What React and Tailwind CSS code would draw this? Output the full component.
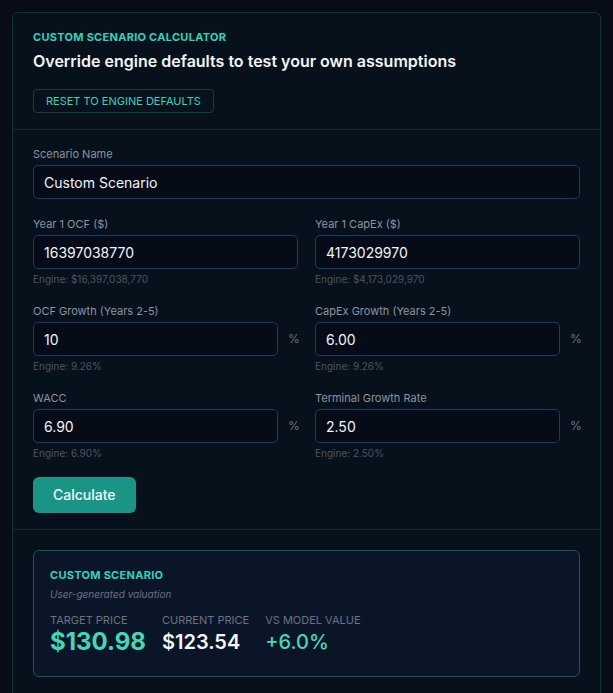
export default function App() {
	const font = { fontFamily: "Inter, 'Noto Sans', sans-serif" };

	const Field = ({ label, value, engine, pct }) => (
		<div className="flex flex-col">
			<label className="mb-[3px] text-[11px] leading-4 text-[#8a94a3]">{label}</label>
			<div className="flex items-center gap-[10px]">
				<input
					defaultValue={value}
					className="h-[34px] w-full min-w-0 flex-1 rounded-[5px] border border-[#1d3a6c] bg-[#050b17] px-2.5 text-sm text-[#f1f5f9] outline-none"
				/>
				{pct && <span className="w-[10px] text-xs text-[#6b7480]">%</span>}
			</div>
			<span className="mt-[3px] text-[10px] leading-[14px] text-[#4b5563]">{engine}</span>
		</div>
	);

	return (
		<div className="min-h-screen bg-[#070c18] px-3 pt-3" style={font}>
			<div className="h-[690px] rounded-t-md border border-b-0 border-[#0f3436] bg-[#06111b]">
				<div className="border-b border-[#0e2a2e] px-5 pt-4 pb-[16px]">
					<div className="text-[11px] font-bold uppercase leading-4 tracking-wide text-[#2dd4bf]">
						Custom Scenario Calculator
					</div>
					<h2 className="mt-1 text-base font-semibold leading-6 text-[#f3f4f6]">
						Override engine defaults to test your own assumptions
					</h2>
					<button className="mt-4 h-6 rounded border border-[#124040] px-3 text-[11px] uppercase text-[#2dd4bf]">
						Reset to Engine Defaults
					</button>
				</div>

				<div className="border-b border-[#0e2a2e] px-5 pt-4 pb-4">
					<div className="mb-[17px] flex flex-col">
						<label className="mb-[3px] text-[11px] leading-4 text-[#8a94a3]">Scenario Name</label>
						<input
							defaultValue="Custom Scenario"
							className="h-[34px] w-full rounded-[5px] border border-[#1d3a6c] bg-[#050b17] px-2.5 text-sm text-[#f1f5f9] outline-none"
						/>
					</div>
					<div className="grid grid-cols-2 gap-x-[17px] gap-y-[17px]">
						<Field label="Year 1 OCF ($)" value="16397038770" engine="Engine: $16,397,038,770" />
						<Field label="Year 1 CapEx ($)" value="4173029970" engine="Engine: $4,173,029,970" />
						<Field label="OCF Growth (Years 2-5)" value="10" engine="Engine: 9.26%" pct />
						<Field label="CapEx Growth (Years 2-5)" value="6.00" engine="Engine: 9.26%" pct />
						<Field label="WACC" value="6.90" engine="Engine: 6.90%" pct />
						<Field label="Terminal Growth Rate" value="2.50" engine="Engine: 2.50%" pct />
					</div>
					<button className="mt-[17px] h-9 rounded-md bg-[#1a9585] px-5 text-sm font-medium text-[#f0fdfa]">
						Calculate
					</button>
				</div>

				<div className="px-5 pt-5">
					<div className="rounded-md border border-[#125a57] bg-[#0a1628] px-4 pt-4 pb-5">
						<div className="text-[11px] font-bold uppercase leading-4 tracking-wide text-[#2dd4bf]">
							Custom Scenario
						</div>
						<div className="mt-[3px] text-[10px] italic leading-4 text-[#6b7280]">
							User-generated valuation
						</div>
						<div className="mt-[10px] flex gap-4">
							<div>
								<div className="text-[11px] uppercase leading-4 text-[#6b7280]">Target Price</div>
								<div className="text-2xl font-bold leading-7 text-[#40d9b8]">$130.98</div>
							</div>
							<div>
								<div className="text-[11px] uppercase leading-4 text-[#6b7280]">Current Price</div>
								<div className="text-xl font-semibold leading-7 text-[#f3f4f6]">$123.54</div>
							</div>
							<div>
								<div className="text-[11px] uppercase leading-4 text-[#6b7280]">vs Model Value</div>
								<div className="text-xl font-medium leading-7 text-[#40d9b8]">+6.0%</div>
							</div>
						</div>
					</div>
				</div>
			</div>
		</div>
	);
}
